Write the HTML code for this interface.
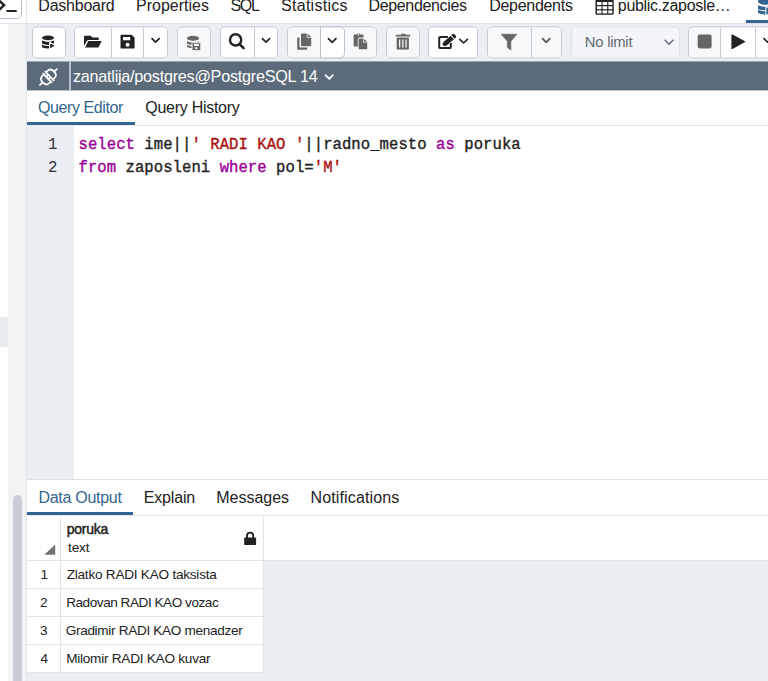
<!DOCTYPE html>
<html><head><meta charset="utf-8">
<style>
*{box-sizing:border-box}
html,body{margin:0;padding:0}
body{width:768px;height:681px;overflow:hidden;position:relative;background:#fff;font-family:"Liberation Sans",sans-serif;color:#222}
.a{position:absolute}
.t{position:absolute;white-space:pre;line-height:1}
.grp{position:absolute;top:26px;height:32px;border:1px solid #c3c8d1;border-radius:5px;background:#fff;transform:translateY(0.4px);overflow:hidden;display:flex}
.grp i{display:block;height:100%;background:#fff;flex:none}
.grp i.g{background:#f7f8fa}
.grp i.s{border-left:1px solid #c3c8d1}
svg{position:absolute;overflow:visible}
</style></head><body>
<!-- left strip -->
<div class="a" style="left:8px;top:24px;width:18px;height:657px;background:#f2f3f5"></div>
<div class="a" style="left:0;top:317px;width:8px;height:30px;background:#e8ebf0"></div>
<div class="a" style="left:13px;top:495px;width:9px;height:200px;border-radius:5px;background:#c9cdd6"></div>
<div class="a" style="left:26px;top:0;width:1px;height:681px;background:#e2e5ea"></div>
<div class="a" style="left:0;top:23px;width:768px;height:1px;background:#dde0e6"></div>

<!-- terminal button -->
<div class="a" style="left:-10px;top:-10px;width:32px;height:29px;border:1px solid #bac1cd;border-radius:5px;background:#fff"></div>

<!-- top tabs -->
<div class="a" style="left:746px;top:20px;width:22px;height:3px;background:#326690"></div>

<!-- toolbar -->
<div class="a" style="left:27px;top:24px;width:741px;height:37px;background:#ebeef3"></div>
<div class="grp" style="left:32px;width:34px"><i style="width:32px"></i></div>
<div class="grp" style="left:74px;width:94px"><i style="width:36px"></i><i class="s" style="width:32px"></i><i class="s" style="width:24px"></i></div>
<div class="grp" style="left:177px;width:34px"><i class="g" style="width:32px"></i></div>
<div class="grp" style="left:220px;width:58px"><i style="width:33px"></i><i class="s" style="width:24px"></i></div>
<div class="grp" style="left:287px;width:90px"><i class="g" style="width:33px"></i><i class="g" style="width:24px"></i><i class="g" style="width:32px"></i></div>
<div class="a" style="left:320px;top:26px;width:25px;height:32px;border:1px solid #bcc2cc;border-radius:0 5px 5px 0;background:#fff;transform:translateY(0.4px)"></div>
<div class="grp" style="left:386px;width:34px"><i class="g" style="width:32px"></i></div>
<div class="grp" style="left:428px;width:50px"><i style="width:48px"></i></div>
<div class="grp" style="left:487px;width:75px"><i class="g" style="width:43px"></i><i class="g s" style="width:31px"></i></div>
<div class="grp" style="left:571px;width:109px;border-color:#dde0e6"><i class="g" style="width:107px;background:#f3f5f9"></i></div>
<div class="grp" style="left:688px;width:100px"><i class="g" style="width:31px"></i><i class="s" style="width:35px"></i><i class="s" style="width:33px"></i></div>

<!-- connection bar -->
<div class="a" style="left:27px;top:61px;width:741px;height:29.3px;background:#5b6b7a;transform:translateY(0.4px)"></div>
<div class="a" style="left:69px;top:61px;width:2px;height:29.3px;background:#b9c1cb;transform:translateY(0.4px)"></div>

<!-- query tabs -->
<div class="a" style="left:27px;top:122px;width:108px;height:3px;background:#326690"></div>
<div class="a" style="left:27px;top:125px;width:741px;height:1px;background:#e3e6eb"></div>

<!-- editor -->
<div class="a" style="left:27px;top:126px;width:47px;height:353px;background:#ebeef3"></div>
<div class="a" style="left:27px;top:479px;width:741px;height:1px;background:#dde0e6"></div>
<div class="t" style="left:48px;top:134px;font-family:'Liberation Mono';font-size:15.6px;line-height:23.4px;color:#333;text-align:right;width:8px">1
2</div>
<div class="t" style="left:78.5px;top:134px;font-family:'Liberation Mono';font-size:15.6px;line-height:23.4px;color:#222;letter-spacing:0.05px;-webkit-text-stroke:0.35px currentColor"><span style="color:#990099">select</span> ime||<span style="color:#aa1111">' RADI KAO '</span>||radno_mesto <span style="color:#990099">as</span> poruka
<span style="color:#990099">from</span> zaposleni <span style="color:#990099">where</span> pol=<span style="color:#aa1111">'M'</span></div>

<!-- data output tabs -->
<div class="a" style="left:27px;top:512px;width:106px;height:3px;background:#326690"></div>
<div class="a" style="left:27px;top:515px;width:741px;height:1px;background:#e3e6eb"></div>

<!-- grid -->
<div class="a" style="left:27px;top:516px;width:741px;height:165px;background:#ebeef3"></div>
<div class="a" style="left:27px;top:516px;width:741px;height:44px;background:#fff"></div>
<div class="a" style="left:27px;top:560px;width:236px;height:113px;background:#fff"></div>
<div class="a" style="left:27px;top:560px;width:741px;height:1px;background:#e1e4e9"></div>
<div class="a" style="left:27px;top:588px;width:236px;height:1px;background:#e1e4e9"></div>
<div class="a" style="left:27px;top:616px;width:236px;height:1px;background:#e1e4e9"></div>
<div class="a" style="left:27px;top:644px;width:236px;height:1px;background:#e1e4e9"></div>
<div class="a" style="left:27px;top:672px;width:236px;height:1px;background:#e1e4e9"></div>
<div class="a" style="left:60px;top:516px;width:1px;height:157px;background:#e1e4e9"></div>
<div class="a" style="left:263px;top:516px;width:1px;height:157px;background:#e1e4e9"></div>
<svg class="a" style="left:0;top:0" width="768" height="681" viewBox="0 0 768 681">
<!-- terminal -->
<path d="M-2 -0.6 L4.1 5.2 L-2 11" fill="none" stroke="#222" stroke-width="2.4" stroke-linejoin="miter"/>
<rect x="6.3" y="9.9" width="10.6" height="2.1" rx="0.8" fill="#222"/>
<!-- table icon tab -->
<rect x="595.5" y="-1" width="18.2" height="15.8" rx="1.5" fill="#222"/>
<g fill="#fff">
<rect x="597" y="2" width="4.5" height="3"/><rect x="602.6" y="2" width="4.6" height="3"/><rect x="608.3" y="2" width="4" height="3"/>
<rect x="597" y="6.2" width="4.5" height="3"/><rect x="602.6" y="6.2" width="4.6" height="3"/><rect x="608.3" y="6.2" width="4" height="3"/>
<rect x="597" y="10.4" width="4.5" height="3"/><rect x="602.6" y="10.4" width="4.6" height="3"/><rect x="608.3" y="10.4" width="4" height="3"/>
</g>
<!-- db icon in tab -->
<g fill="#326690">
<ellipse cx="765" cy="1.4" rx="7" ry="3.3"/>
<path d="M758 5.3 Q765 8.1 772 5.3 L772 8.9 Q765 11.7 758 8.9 Z"/>
<path d="M758 9.8 Q765 12.6 772 9.8 L772 13 Q765 15.8 758 13 Z"/>
</g>
<rect x="765.9" y="7.2" width="6" height="7.6" fill="#326690" stroke="#fff" stroke-width="0.9"/>
<!-- toolbar: db execute -->
<g fill="#222">
<ellipse cx="48" cy="37.85" rx="6" ry="2.3"/>
<path d="M42 40.6 Q48 43.2 54 40.6 L54 43.6 Q48 46.2 42 43.6 Z"/>
<path d="M42 44.8 Q48 47.4 54 44.8 L54 47.2 Q48 49.8 42 47.2 Z"/>
</g>
<path d="M49.6 42.3 L55.6 45.8 L49.6 49.3 Z" fill="#222" stroke="#fff" stroke-width="1.1" stroke-linejoin="round"/>
<!-- folder -->
<path d="M84 36.6 Q84 35.7 85 35.7 L90.8 35.7 L92.4 37.6 L97.8 37.6 Q98.8 37.6 98.8 38.6 L98.8 40 L88.6 40 Q87.4 40 86.8 41 L84 46 Z" fill="#222"/>
<path d="M88.3 40.9 L101.8 40.9 L98.4 47.4 L85.1 47.4 Z" fill="#222"/>
<!-- floppy -->
<path d="M121.6 34.7 L131.6 34.7 L134.6 37.7 L134.6 47.6 Q134.6 48.6 133.6 48.6 L121.5 48.6 Q120.5 48.6 120.5 47.6 L120.5 35.7 Q120.5 34.7 121.6 34.7 Z M123 37.1 L123 40.3 L130.2 40.3 L130.2 37.1 Z" fill="#222" fill-rule="evenodd"/>
<circle cx="127.6" cy="44.7" r="2" fill="#fff"/>
<!-- chevrons -->
<g fill="none" stroke="#222" stroke-width="1.65" stroke-linecap="round" stroke-linejoin="round">
<path d="M152 38.6 L155.6 42.2 L159.2 38.6"/>
<path d="M262.4 38.6 L266 42.2 L269.6 38.6"/>
<path d="M328.4 38.6 L332.2 42.4 L336 38.6"/>
<path d="M459.8 39.3 L463.6 43 L467.4 39.3"/>
<path d="M764 38.6 L767.6 42.2 L771.2 38.6"/>
</g>
<g fill="none" stroke="#555" stroke-width="1.7" stroke-linecap="round" stroke-linejoin="round">
<path d="M542.6 38.6 L546.2 42.4 L549.8 38.6"/>
<path d="M665 40.3 L669 44.3 L673 40.3" stroke="#646b82" stroke-width="1.5"/>
</g>
<!-- db save gray -->
<g fill="#666">
<ellipse cx="193" cy="38.2" rx="6" ry="2.5"/>
<path d="M187 41.2 Q193 43.8 199 41.2 L199 43.7 Q193 46.3 187 43.7 Z"/>
<path d="M187 45 Q193 47.6 199 45 L199 47 Q193 49.6 187 47 Z"/>
</g>
<rect x="192" y="42.3" width="8.8" height="8.4" rx="0.8" fill="#666" stroke="#f3f5f9" stroke-width="1"/>
<rect x="194" y="43.8" width="4.8" height="2.2" fill="#fff"/>
<rect x="195.2" y="47.2" width="2" height="2" fill="#fff"/>
<!-- magnifier -->
<circle cx="235.6" cy="39.9" r="5.6" fill="none" stroke="#222" stroke-width="2.4"/>
<path d="M239.8 44.3 L243.6 48.1" stroke="#222" stroke-width="2.6" stroke-linecap="round"/>
<!-- copy -->
<path d="M297.2 37.4 L299.5 37.4 L299.5 46.4 Q299.5 47.6 300.7 47.6 L307.2 47.6 L307.2 48.8 Q307.2 49.8 306.2 49.8 L298.2 49.8 Q297.2 49.8 297.2 48.8 Z" fill="#666"/>
<path d="M302 33.6 L306.7 33.6 L306.7 37.8 L311.2 37.8 L311.2 45.2 Q311.2 46.2 310.2 46.2 L302 46.2 Q301 46.2 301 45.2 L301 34.6 Q301 33.6 302 33.6 Z" fill="#666"/>
<path d="M307.5 33.7 L311.1 37 L307.5 37 Z" fill="#666"/>
<!-- paste -->
<path d="M354.4 34.6 L356.9 34.6 Q357.3 33.6 358.6 33.6 Q359.9 33.6 360.3 34.6 L362.7 34.6 Q363.5 34.6 363.5 35.4 L363.5 37.6 L359.6 37.6 Q357.8 37.6 357.8 39.4 L357.8 46.4 L354.4 46.4 Q353.6 46.4 353.6 45.6 L353.6 35.4 Q353.6 34.6 354.4 34.6 Z" fill="#666"/>
<circle cx="358.6" cy="35" r="0.7" fill="#f7f8fa"/>
<path d="M359.4 38.6 L363.1 38.6 L363.1 42.5 L367.2 42.5 L367.2 48.4 Q367.2 49.2 366.4 49.2 L359.4 49.2 Q358.6 49.2 358.6 48.4 L358.6 39.4 Q358.6 38.6 359.4 38.6 Z" fill="#666"/>
<path d="M363.8 38.8 L367.1 41.8 L363.8 41.8 Z" fill="#666"/>
<!-- trash -->
<path d="M400.8 34.8 Q400.8 33.7 402 33.7 L404.8 33.7 Q406 33.7 406 34.8 L410 34.8 Q410.2 34.8 410.2 35.2 L410.2 36.6 L395.8 36.6 L395.8 35.2 Q395.8 34.8 396.2 34.8 Z" fill="#666"/>
<path d="M396.7 37.6 L408.9 37.6 L408.9 48.4 Q408.9 49.6 407.7 49.6 L397.9 49.6 Q396.7 49.6 396.7 48.4 Z" fill="#666"/>
<g fill="#f3f5f9"><rect x="399" y="39.6" width="1.3" height="8"/><rect x="402.2" y="39.6" width="1.3" height="8"/><rect x="405.4" y="39.6" width="1.3" height="8"/></g>
<!-- edit -->
<path d="M447.9 36.9 L440.4 36.9 Q439.2 36.9 439.2 38.1 L439.2 46.9 Q439.2 48.1 440.4 48.1 L449.6 48.1 Q450.8 48.1 450.8 46.9 L450.8 43.1" fill="none" stroke="#222" stroke-width="2"/>
<g transform="translate(443.3 45.3) rotate(-41)" fill="#222">
<path d="M0 -1.3 L2.4 -2.4 L11.9 -2.4 L11.9 2.4 L2.4 2.4 L0 1.3 Z"/>
<path d="M12.8 -2.4 L14.4 -2.4 Q15.7 -2.4 15.7 -1.1 L15.7 1.1 Q15.7 2.4 14.4 2.4 L12.8 2.4 Z"/>
</g>
<!-- filter -->
<path d="M501.2 34.2 L517 34.2 L510.9 41.2 L510.9 49.9 L507.3 47.6 L507.3 41.2 Z" fill="#666" stroke="#666" stroke-width="0.6" stroke-linejoin="round"/>
<!-- stop -->
<rect x="697.7" y="34.5" width="13.9" height="13.9" rx="1.8" fill="#666"/>
<!-- play -->
<path d="M732.6 34.6 L745 41.3 Q745.8 41.7 745 42.1 L732.6 48.9 Q731.4 49.5 731.4 48.2 L731.4 35.3 Q731.4 34 732.6 34.6 Z" fill="#222"/>
<!-- plug -->
<g transform="translate(48.4 77) rotate(-43.5) scale(0.92)" fill="none" stroke="#fff" stroke-width="1.85" stroke-linecap="round">
<path d="M-12.6 0 L-8.5 0"/><path d="M8.5 0 L12.6 0"/>
<path d="M-1.6 -5.4 L-4.2 -5.4 Q-8.6 -5.4 -8.6 0 Q-8.6 5.4 -4.2 5.4 L-1.6 5.4"/>
<path d="M1.6 -5.4 L4.2 -5.4 Q8.6 -5.4 8.6 0 Q8.6 5.4 4.2 5.4 L1.6 5.4"/>
<path d="M-1.6 -6.6 L-1.6 6.6"/><path d="M1.6 -6.6 L1.6 6.6"/>
<path d="M-1.6 -1.6 L1.6 -1.6"/><path d="M-1.6 1.6 L1.6 1.6"/>
</g>
<!-- conn chevron -->
<path d="M325.6 75.2 L329.2 78.8 L332.8 75.2" fill="none" stroke="#fff" stroke-width="1.9" stroke-linecap="round" stroke-linejoin="round"/>
<!-- triangle -->
<path d="M55.2 544.6 L55.2 554.8 L44.3 554.8 Z" fill="#737373"/>
<!-- lock -->
<path d="M247 538 L247 535.7 A3.1 3.1 0 0 1 253.2 535.7 L253.2 538" fill="none" stroke="#222" stroke-width="1.9"/>
<rect x="244.2" y="537.6" width="11.9" height="7.3" rx="0.6" fill="#222"/>
</svg>
<div class="t" style="left:38.30px;top:-2.00px;font-family:'Liberation Sans';font-size:16.0px;font-weight:400;color:#222;letter-spacing:-0.225px">Dashboard</div>
<div class="t" style="left:136.00px;top:-2.00px;font-family:'Liberation Sans';font-size:16.0px;font-weight:400;color:#222;letter-spacing:0.000px">Properties</div>
<div class="t" style="left:230.40px;top:-2.00px;font-family:'Liberation Sans';font-size:16.0px;font-weight:400;color:#222;letter-spacing:-1.250px">SQL</div>
<div class="t" style="left:281.10px;top:-2.00px;font-family:'Liberation Sans';font-size:16.0px;font-weight:400;color:#222;letter-spacing:0.267px">Statistics</div>
<div class="t" style="left:368.50px;top:-2.00px;font-family:'Liberation Sans';font-size:16.0px;font-weight:400;color:#222;letter-spacing:-0.345px">Dependencies</div>
<div class="t" style="left:489.20px;top:-2.00px;font-family:'Liberation Sans';font-size:16.0px;font-weight:400;color:#222;letter-spacing:-0.289px">Dependents</div>
<div class="t" style="left:617.80px;top:-2.00px;font-family:'Liberation Sans';font-size:16.0px;font-weight:400;color:#222;letter-spacing:-0.314px">public.zaposle…</div>
<div class="t" style="left:584.80px;top:35.00px;font-family:'Liberation Sans';font-size:14.8px;font-weight:400;color:#62676f;letter-spacing:-0.229px">No limit</div>
<div class="t" style="left:73.00px;top:68.00px;font-family:'Liberation Sans';font-size:16.2px;font-weight:400;color:#fff;letter-spacing:-0.252px">zanatlija/postgres@PostgreSQL 14</div>
<div class="t" style="left:38.00px;top:100.00px;font-family:'Liberation Sans';font-size:16.0px;font-weight:400;color:#326690;letter-spacing:-0.418px">Query Editor</div>
<div class="t" style="left:145.25px;top:100.00px;font-family:'Liberation Sans';font-size:16.0px;font-weight:400;color:#222;letter-spacing:-0.271px">Query History</div>
<div class="t" style="left:38.50px;top:490.20px;font-family:'Liberation Sans';font-size:16.0px;font-weight:400;color:#326690;letter-spacing:-0.290px">Data Output</div>
<div class="t" style="left:143.75px;top:490.20px;font-family:'Liberation Sans';font-size:16.0px;font-weight:400;color:#222;letter-spacing:-0.175px">Explain</div>
<div class="t" style="left:216.25px;top:490.20px;font-family:'Liberation Sans';font-size:16.0px;font-weight:400;color:#222;letter-spacing:-0.021px">Messages</div>
<div class="t" style="left:310.60px;top:490.20px;font-family:'Liberation Sans';font-size:16.0px;font-weight:400;color:#222;letter-spacing:0.125px">Notifications</div>
<div class="t" style="left:66.80px;top:522.00px;font-family:'Liberation Sans';font-size:14.0px;font-weight:400;color:#222;-webkit-text-stroke:0.45px #222;letter-spacing:-0.260px">poruka</div>
<div class="t" style="left:68.00px;top:540.90px;font-family:'Liberation Sans';font-size:13.6px;font-weight:400;color:#222;letter-spacing:-0.133px">text</div>
<div class="t" style="left:40.50px;top:567.60px;font-family:'Liberation Sans';font-size:13.6px;font-weight:400;color:#222;letter-spacing:0.000px">1</div>
<div class="t" style="left:66.70px;top:567.60px;font-family:'Liberation Sans';font-size:13.6px;font-weight:400;color:#222;letter-spacing:-0.239px">Zlatko RADI KAO taksista</div>
<div class="t" style="left:39.90px;top:595.60px;font-family:'Liberation Sans';font-size:13.6px;font-weight:400;color:#222;letter-spacing:0.000px">2</div>
<div class="t" style="left:66.20px;top:595.60px;font-family:'Liberation Sans';font-size:13.6px;font-weight:400;color:#222;letter-spacing:-0.471px">Radovan RADI KAO vozac</div>
<div class="t" style="left:39.90px;top:623.60px;font-family:'Liberation Sans';font-size:13.6px;font-weight:400;color:#222;letter-spacing:0.000px">3</div>
<div class="t" style="left:65.70px;top:623.60px;font-family:'Liberation Sans';font-size:13.6px;font-weight:400;color:#222;letter-spacing:-0.324px">Gradimir RADI KAO menadzer</div>
<div class="t" style="left:40.60px;top:651.60px;font-family:'Liberation Sans';font-size:13.6px;font-weight:400;color:#222;letter-spacing:0.000px">4</div>
<div class="t" style="left:66.20px;top:651.60px;font-family:'Liberation Sans';font-size:13.6px;font-weight:400;color:#222;letter-spacing:-0.248px">Milomir RADI KAO kuvar</div>
</body></html>
